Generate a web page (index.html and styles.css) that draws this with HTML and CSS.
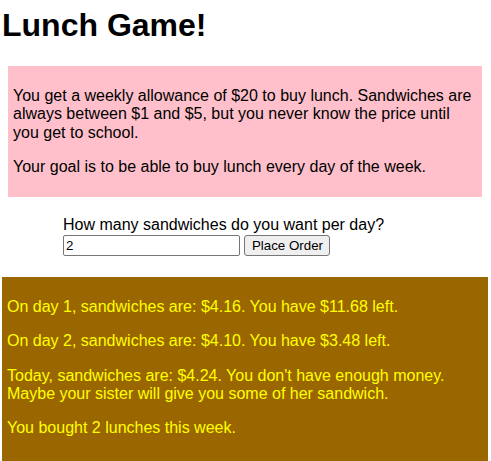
FILE: index.html
```html
<!DOCTYPE html>
<html>
<head>
<meta charset="utf-8">
<title>Lunch Game!</title>
<link rel="stylesheet" href="styles.css">
</head>
<body>
<h1 class="title">Lunch Game!</h1>
<div class="intro">
  <p>You get a weekly allowance of $20 to buy lunch. Sandwiches are always between $1 and $5, but you never know the price until you get to school.</p>
  <p>Your goal is to be able to buy lunch every day of the week.</p>
</div>
<div class="order">
  <label class="order-label" for="count">How many sandwiches do you want per day?</label><br>
  <input class="order-input" id="count" type="text" value="2"> <button class="order-button" type="button">Place Order</button>
</div>
<div class="results">
  <p>On day 1, sandwiches are: $4.16. You have $11.68 left.</p>
  <p>On day 2, sandwiches are: $4.10. You have $3.48 left.</p>
  <p>Today, sandwiches are: $4.24. You don't have enough money. Maybe your sister will give you some of her sandwich.</p>
  <p>You bought 2 lunches this week.</p>
</div>
</body>
</html>
```
FILE: styles.css
```css
html, body {
  background: #ffffff;
}
body {
  margin: 0 3px 0 2px;
  font-family: "Liberation Sans", Arial, sans-serif;
  font-size: 16px;
  line-height: 1.15;
  color: #000000;
}
.title {
  font-size: 32px;
  font-weight: bold;
  line-height: 1.15;
  margin: 7px 0 22px 0;
}
.intro {
  background: #ffc0cb;
  margin: 0 6px;
  padding: 5px;
  overflow: hidden;
}
.intro p,
.results p {
  margin: 16px 0;
}
.order {
  margin: 19px 0 21px 0;
  padding-left: 61px;
}
.order-input {
  font-family: "Liberation Sans", Arial, sans-serif;
  font-size: 13.33px;
  width: 177px;
  height: 21px;
  box-sizing: border-box;
  border: 1px solid #767676;
  border-radius: 2px;
  padding: 1px 2px;
  margin: 0;
  vertical-align: baseline;
}
.order-button {
  font-family: "Liberation Sans", Arial, sans-serif;
  font-size: 13.33px;
  width: 86px;
  height: 21px;
  box-sizing: border-box;
  background: #efefef;
  border: 1px solid #767676;
  border-radius: 3px;
  padding: 1px 6px;
  margin: 0;
  color: #000000;
}
.results {
  background: #996600;
  color: #ffff00;
  padding: 5px;
  overflow: hidden;
  min-height: 180px;
}
```
